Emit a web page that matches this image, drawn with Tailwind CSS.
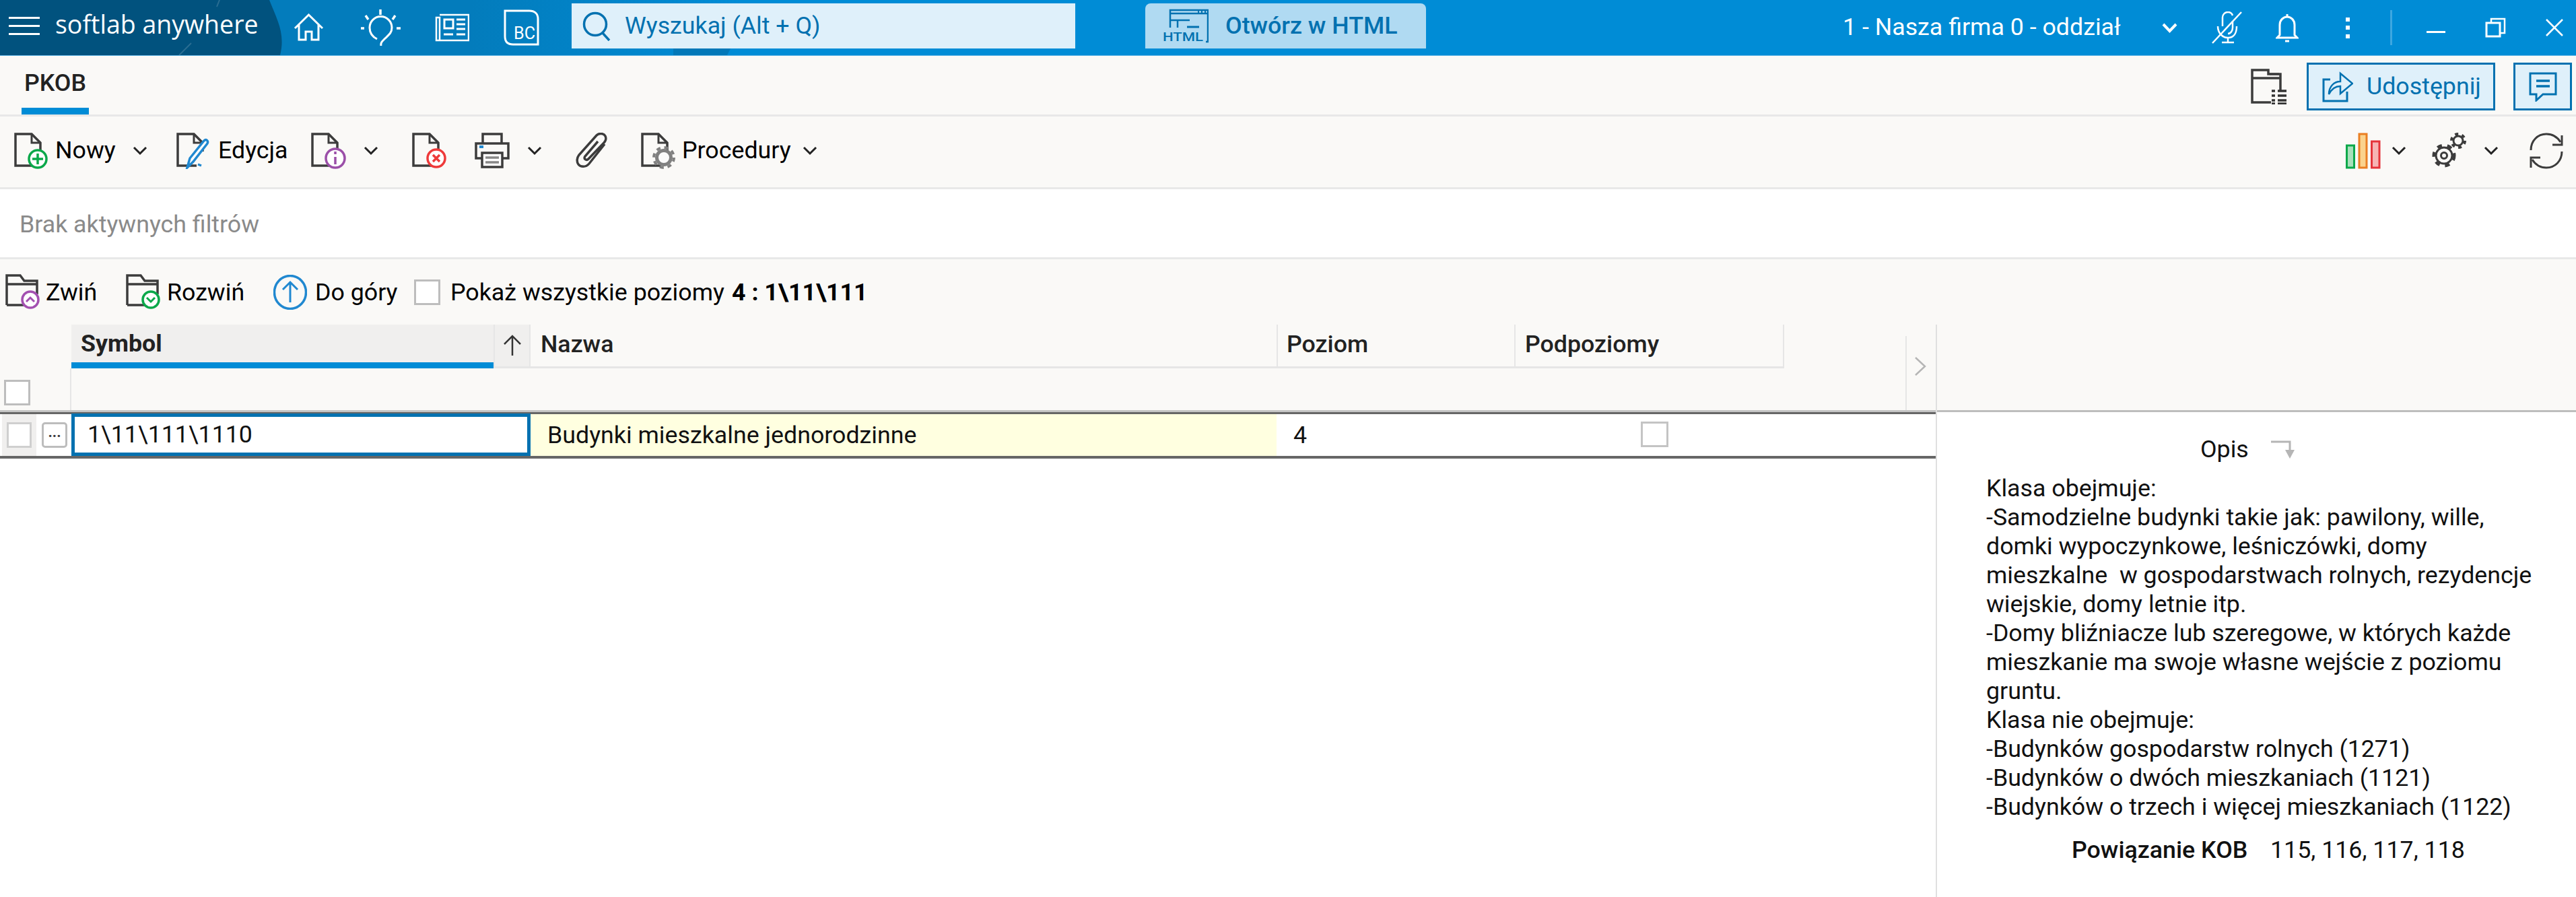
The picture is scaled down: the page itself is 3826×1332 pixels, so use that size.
<!DOCTYPE html>
<html lang="pl">
<head>
<meta charset="utf-8">
<title>PKOB</title>
<script src="https://cdn.jsdelivr.net/npm/@tailwindcss/browser@4"></script>
</head>
<body class="w-[3826px] h-[1332px] overflow-hidden bg-white font-['Roboto',sans-serif] text-[35.75px] leading-[43px] text-[#111]">
<svg class="hidden" width="0" height="0">
  <symbol id="doc" viewBox="0 0 52 52"><path d="M30 49H2V2H26L39 15V28" fill="#fff" fill-opacity="0" stroke="#3c3c3c" stroke-width="3.5"/><path d="M26 2V15H39" fill="none" stroke="#3c3c3c" stroke-width="3"/></symbol>
  <symbol id="chev" viewBox="0 0 22 14"><path d="M2 2L11 11L20 2" fill="none" stroke="#222" stroke-width="3"/></symbol>
  <symbol id="folder" viewBox="0 0 52 52"><path d="M2 46V8V2H22L28 10H47V15M2 46H32M2 15H47V30" fill="none" stroke="#3c3c3c" stroke-width="3.5"/></symbol>
</svg>

<!-- top bar -->
<header class="relative h-[83px] flex items-start bg-[linear-gradient(90deg,#037cbc_0,#037cbc_700px,#008cd6_1100px)] border-b border-[#66b8e6] text-white overflow-hidden">
  <svg class="absolute left-0 top-0" width="1200" height="82" viewBox="0 0 1200 82">
    <path d="M0 0H400C412 30 424 50 416 82H0Z" fill="#01527e"/>
    <path d="M326 0L322 10M284 64L266 82" stroke="#2a6d92" stroke-width="2"/>
    <path d="M1000 72H1085L1080 82H1000Z" fill="#0278b8"/>
  </svg>
  <div class="relative flex items-center h-[82px] shrink-0">
    <div class="ml-[13px] w-[46px] flex flex-col gap-[9px] pb-[6px]">
      <div class="h-[3px] bg-white"></div><div class="h-[3px] bg-white"></div><div class="h-[3px] bg-white"></div>
    </div>
    <div class="ml-[23px] w-[354px] pb-[12px] font-['Open_Sans',sans-serif] text-[37.5px] whitespace-nowrap">softlab anywhere</div>
    <svg width="45" height="42" viewBox="0 0 45 42"><path d="M2 22L22.500 2L43 22M8 17V39H18V27H27V39H37V17" fill="none" stroke="#fff" stroke-width="3"/></svg>
    <svg class="ml-[55px]" width="59" height="54" viewBox="0 0 59 54"><path d="M29 0V8M7 9L11 15M51 9L47 15M0 28H5M53 28H59" stroke="#fff" stroke-width="3.500"/><path d="M24 44C16 40 13 33 13 27A16.500 16.500 0 0 1 46 27C46 35 41 38 36 43C32 47 29 49 30 54" fill="none" stroke="#fff" stroke-width="3"/></svg>
    <svg class="ml-[51px]" width="51" height="42" viewBox="0 0 51 42"><path d="M7 2H50V40H2V6H7V40" fill="none" stroke="#fff" stroke-width="2.500"/><path d="M14 9H27V22H14Z" fill="none" stroke="#fff" stroke-width="3"/><path d="M32 9H45M32 16H45M32 23H45M13 31H27M32 31H45" stroke="#fff" stroke-width="3"/></svg>
    <svg class="ml-[51px]" width="53" height="54" viewBox="0 0 53 54"><path d="M2 2H38C46 2 51 6 51 14V52H14C6 52 2 48 2 40Z" fill="none" stroke="#fff" stroke-width="3"/><text x="15" y="44" font-family="Roboto" font-size="25" fill="#fff" textLength="32" lengthAdjust="spacingAndGlyphs">BC</text></svg>
  </div>
  <div class="relative mt-[5px] ml-[48px] w-[748px] h-[67px] bg-[#dff0fa] flex items-center text-[#0271b0] shrink-0">
    <svg class="ml-[16px]" width="42" height="44" viewBox="0 0 42 44"><circle cx="19" cy="19" r="16.500" fill="none" stroke="#0271b0" stroke-width="3.500"/><path d="M30 32L40 43" stroke="#0271b0" stroke-width="3.500"/></svg>
    <span class="ml-[21px] whitespace-nowrap">Wyszukaj (Alt + Q)</span>
  </div>
  <div class="relative mt-[5px] ml-[104px] w-[417px] h-[67px] bg-[#b0daf2] rounded-t-[8px] flex items-center text-[#0271b0] font-medium shrink-0">
    <svg class="ml-[26px]" width="68" height="52" viewBox="0 0 68 52"><path d="M11 18V2H67V49H64M11 7H67M11 17H40M22 17V28M11 18V28" fill="none" stroke="#0271b0" stroke-width="2.500"/><path d="M52 4.500H54M57 4.500H59M62 4.500H64" stroke="#0271b0" stroke-width="3"/><path d="M36 27H54" stroke="#0271b0" stroke-width="3"/><text x="0" y="48" font-family="Roboto" font-weight="500" font-size="19" fill="#0271b0" textLength="60" lengthAdjust="spacingAndGlyphs">HTML</text></svg>
    <span class="ml-[25px] whitespace-nowrap">Otwórz w HTML</span>
  </div>
  <div class="relative flex items-center h-[82px] ml-[621px] shrink-0">
    <div class="w-[410px] -ml-[2px] mr-[2px] pb-[2px] whitespace-nowrap">1 - Nasza firma 0 - oddział</div>
    <svg class="ml-[62px]" width="23" height="15" viewBox="0 0 23 15"><path d="M2 2L11.500 12L21 2" fill="none" stroke="#fff" stroke-width="4"/></svg>
    <svg class="ml-[50px]" width="48" height="48" viewBox="0 0 48 48"><path d="M32 6C31 3 28 1 25 1C21 1 17 4 17 9V22M32 14V24C32 29 29 33 25 33M10 22C10 31 16 39 25 39C33 39 38 33 38 22M25 39V46M16 46H34" fill="none" stroke="#fff" stroke-width="2.500"/><path d="M45 1L2 47" stroke="#fff" stroke-width="2.500"/></svg>
    <svg class="ml-[48px]" width="34" height="43" viewBox="0 0 34 43"><path d="M17 1V5M6 32V17C6 10 11 5 17 5C23 5 28 10 28 17V32L32 36H2Z" fill="none" stroke="#fff" stroke-width="3"/><path d="M14 41H20" stroke="#fff" stroke-width="3"/></svg>
    <div class="ml-[70px] w-[6px] h-[31px] flex flex-col justify-between">
      <div class="h-[6px] bg-white"></div><div class="h-[6px] bg-white"></div><div class="h-[6px] bg-white"></div>
    </div>
    <div class="ml-[60px] w-[3px] h-[52px] bg-[#3ea7e0]"></div>
    <div class="ml-[51px] w-[28px] h-[3px] bg-white mt-[12px]"></div>
    <svg class="ml-[59px]" width="31" height="30" viewBox="0 0 31 30"><path d="M9 7V2H29V23H22" fill="none" stroke="#fff" stroke-width="2.500"/><path d="M2 8H22V28H2Z" fill="none" stroke="#fff" stroke-width="3"/></svg>
    <svg class="ml-[58px]" width="28" height="26" viewBox="0 0 28 26"><path d="M2 1L26 25M26 1L2 25" stroke="#fff" stroke-width="2.500"/></svg>
  </div>
</header>

<!-- tabs -->
<div class="h-[90px] flex bg-[#faf9f7] border-b-[3px] border-[#e8e8e8]">
  <div class="ml-[32px] w-[100px] h-full border-b-[10px] border-[#008cd6] flex justify-center items-center font-medium text-[#222] pt-[4px]">PKOB</div>
  <div class="ml-auto flex">
    <svg class="mt-[19px]" width="53" height="53" viewBox="0 0 53 53"><path d="M44 32V8H26V2H2V50H30M2 14H44" fill="none" stroke="#3c3c3c" stroke-width="3.500"/><path d="M28 8H42" stroke="#3c3c3c" stroke-width="3"/><path d="M31 33H36M40 33H53M31 40H36M40 40H53M31 47H36M40 47H53M31 52H36M40 52H53" stroke="#333" stroke-width="3.500"/></svg>
    <div class="mt-[10px] ml-[30px] w-[280px] h-[71px] border-[3px] border-[#0271b0] bg-[#dff0fa] flex items-center text-[#0271b0]">
      <svg class="ml-[20px]" width="46" height="46" viewBox="0 0 46 46"><path d="M12 12H2V44H37V30" fill="none" stroke="#0271b0" stroke-width="3"/><path d="M10 34C10 22 18 15 27 15V3L45 18L27 33V22C20 22 14 26 10 34Z" fill="none" stroke="#0271b0" stroke-width="2.500"/></svg>
      <span class="ml-[20px] whitespace-nowrap">Udostępnij</span>
    </div>
    <div class="mt-[10px] ml-[27px] mr-[6px] w-[87px] h-[71px] border-[3px] border-[#0271b0] bg-[#dff0fa] flex items-center justify-center">
      <svg width="42" height="44" viewBox="0 0 42 44"><path d="M2 2H40V33H21L11 42V33H2Z" fill="none" stroke="#0271b0" stroke-width="3"/><path d="M11 13H31M11 21H31" stroke="#0271b0" stroke-width="3.500"/></svg>
    </div>
  </div>
</div>

<!-- toolbar -->
<div class="h-[108px] flex items-center bg-[#faf9f7] border-b-[3px] border-[#e8e8e8] text-black pb-[4px]">
  <svg class="ml-[21px]" width="50" height="54" viewBox="0 0 50 54"><use href="#doc" width="52" height="52"/><circle cx="35" cy="39" r="13" fill="#fff" stroke="#0ba84a" stroke-width="3.500"/><path d="M35 31V47M27 39H43" stroke="#0ba84a" stroke-width="3.500"/></svg>
  <span class="ml-[11px] w-[88px] whitespace-nowrap">Nowy</span>
  <svg class="ml-[27px]" width="22" height="14" viewBox="0 0 22 14"><use href="#chev"/></svg>
  <svg class="ml-[43px]" width="52" height="54" viewBox="0 0 52 54"><use href="#doc" width="52" height="52"/><path d="M32 47L37 49M16 52L20 38L41 12C44 9 48 12 46 16L25 43Z" fill="#fff" stroke="#2088d0" stroke-width="3.500"/></svg>
  <span class="ml-[10px] w-[101px] whitespace-nowrap">Edycja</span>
  <svg class="ml-[37px]" width="52" height="54" viewBox="0 0 52 54"><use href="#doc" width="52" height="52"/><circle cx="36" cy="38" r="14" fill="#fff" stroke="#9b4fa8" stroke-width="3.500"/><path d="M36 36V47M36 28V32" stroke="#9b4fa8" stroke-width="3.500"/></svg>
  <svg class="ml-[26px]" width="22" height="14" viewBox="0 0 22 14"><use href="#chev"/></svg>
  <svg class="ml-[50px]" width="52" height="54" viewBox="0 0 52 54"><use href="#doc" width="52" height="52"/><circle cx="36" cy="38" r="13" fill="#fff" stroke="#ee3a3a" stroke-width="3.500"/><path d="M31 33L41 43M41 33L31 43" stroke="#ee3a3a" stroke-width="3.500"/></svg>
  <svg class="ml-[41px]" width="52" height="54" viewBox="0 0 52 54"><path d="M12 16V2H40V16M10 38H2V16H50V38H42" fill="none" stroke="#3c3c3c" stroke-width="3.500"/><path d="M11 30H41V51H11Z" fill="#fff" stroke="#3c3c3c" stroke-width="3.500"/><path d="M7 21H13" stroke="#2088d0" stroke-width="4"/><path d="M16 37H36M16 44H36" stroke="#888" stroke-width="3.500"/></svg>
  <svg class="ml-[26px]" width="22" height="14" viewBox="0 0 22 14"><use href="#chev"/></svg>
  <svg class="ml-[50px]" width="50" height="54" viewBox="0 0 50 54"><path d="M43 17L20 46C15 52 7 51 4 47C1 43 2 37 5 33L31 4C35 0 42 1 44 5C46 9 44 13 42 15L19 39C16 42 11 39 14 35L33 13" fill="none" stroke="#3c3c3c" stroke-width="3.500"/></svg>
  <svg class="ml-[47px]" width="52" height="54" viewBox="0 0 52 54"><use href="#doc" width="52" height="52"/><circle cx="34" cy="37" r="10.500" fill="#fafafa" stroke="#808080" stroke-width="5"/><circle cx="34" cy="37" r="15" fill="none" stroke="#808080" stroke-width="4" stroke-dasharray="6 5.800"/></svg>
  <span class="ml-[9px] w-[160px] whitespace-nowrap">Procedury</span>
  <svg class="ml-[19px]" width="22" height="14" viewBox="0 0 22 14"><use href="#chev"/></svg>
  <div class="ml-auto flex items-center">
    <svg width="52" height="54" viewBox="0 0 52 54"><path d="M1.500 19H12.500V52H1.500Z" fill="#a8e0bb" stroke="#0ba84a" stroke-width="3"/><path d="M20 2H31V52H20Z" fill="#fbd38d" stroke="#ea7f22" stroke-width="3"/><path d="M38.500 13H50V52H38.500Z" fill="#f6b4b4" stroke="#e5333a" stroke-width="3"/></svg>
    <svg class="ml-[16px]" width="22" height="14" viewBox="0 0 22 14"><use href="#chev"/></svg>
    <svg class="ml-[37px]" width="52" height="54" viewBox="0 0 52 54"><circle cx="19" cy="34" r="12" fill="none" stroke="#3c3c3c" stroke-width="3"/><circle cx="19" cy="34" r="4.500" fill="none" stroke="#3c3c3c" stroke-width="3"/><circle cx="19" cy="34" r="15" fill="none" stroke="#3c3c3c" stroke-width="5" stroke-dasharray="7 8"/><circle cx="40" cy="12" r="7" fill="none" stroke="#3c3c3c" stroke-width="3"/><circle cx="40" cy="12" r="10" fill="none" stroke="#3c3c3c" stroke-width="4" stroke-dasharray="5 5.500"/></svg>
    <svg class="ml-[26px]" width="22" height="14" viewBox="0 0 22 14"><use href="#chev"/></svg>
    <svg class="ml-[45px] mr-[18px]" width="52" height="54" viewBox="0 0 52 54"><path d="M3 26C3 12 13 2 26 2C35 2 42 6 47 14" fill="none" stroke="#3c3c3c" stroke-width="3"/><path d="M49 4V18H35" fill="none" stroke="#3c3c3c" stroke-width="3"/><path d="M49 28C49 42 39 52 26 52C17 52 10 48 5 40" fill="none" stroke="#3c3c3c" stroke-width="3"/><path d="M3 52V37H17" fill="none" stroke="#3c3c3c" stroke-width="3"/></svg>
  </div>
</div>

<!-- filters -->
<div class="h-[104px] flex items-center bg-white border-b-[3px] border-[#e8e8e8] pl-[29px] pt-[3px] text-[#8a8a8a]">Brak aktywnych filtrów</div>

<!-- tree tools -->
<div class="h-[97px] flex items-center bg-[#faf9f7] text-black pt-[1px]">
  <svg class="ml-[8px]" width="52" height="54" viewBox="0 0 52 54"><use href="#folder" width="52" height="52"/><circle cx="37" cy="38" r="12" fill="#fff" stroke="#a350b0" stroke-width="3.500"/><path d="M31 41L37 35L43 41" fill="none" stroke="#a350b0" stroke-width="3"/></svg>
  <span class="ml-[8px] w-[75px] whitespace-nowrap">Zwiń</span>
  <svg class="ml-[44px]" width="52" height="54" viewBox="0 0 52 54"><use href="#folder" width="52" height="52"/><circle cx="37" cy="38" r="12" fill="#fff" stroke="#0ba84a" stroke-width="3.500"/><path d="M31 35L37 41L43 35" fill="none" stroke="#0ba84a" stroke-width="3"/></svg>
  <span class="ml-[9px] w-[113px] whitespace-nowrap">Rozwiń</span>
  <svg class="ml-[45px]" width="50" height="52" viewBox="0 0 50 52"><ellipse cx="25" cy="26" rx="23.500" ry="24.500" fill="none" stroke="#2088d0" stroke-width="3.500"/><path d="M25 41V11M14 22L25 11L36 22" fill="none" stroke="#2088d0" stroke-width="3"/></svg>
  <span class="ml-[12px] w-[121px] whitespace-nowrap">Do góry</span>
  <div class="ml-[26px] w-[39px] h-[38px] border-[3px] border-[#bdbdbd] bg-white"></div>
  <span class="ml-[15px] w-[404px] whitespace-nowrap">Pokaż wszystkie poziomy</span>
  <span class="ml-[14px] whitespace-nowrap font-bold">4 : 1\11\111</span>
</div>

<!-- main -->
<div class="flex h-[850px]">
  <div class="w-[2877px] shrink-0 border-r-2 border-[#e0e0e0] bg-white">
    <div class="h-[65px] flex bg-[#faf9f7]">
      <div class="w-[106px] shrink-0"></div>
      <div class="w-[627px] h-[65px] bg-[#f0efee] border-b-[9px] border-[#008cd6] flex items-center pl-[14px] font-bold text-[#222]">Symbol</div>
      <div class="w-[55px] bg-[#f0efee] border-l-2 border-r-2 border-b-[3px] border-[#e6e6e6] flex items-center justify-center">
        <svg width="30" height="32" viewBox="0 0 30 32"><path d="M15 31V3M3 14L15 2L27 14" fill="none" stroke="#333" stroke-width="2.500"/></svg>
      </div>
      <div class="w-[1108px] border-b-[3px] border-[#e6e6e6] flex items-center pl-[15px] pb-[4px] font-medium text-[#222]">Nazwa</div>
      <div class="w-[353px] border-l-2 border-b-[3px] border-[#e6e6e6] flex items-center pl-[13px] pb-[4px] font-medium text-[#222]">Poziom</div>
      <div class="w-[401px] border-l-2 border-r-2 border-b-[3px] border-[#e6e6e6] flex items-center pl-[14px] pb-[4px] font-medium text-[#222]">Podpoziomy</div>
      <div class="w-[180px]"></div>
      <div class="w-[45px] mt-[17px] border-l-2 border-[#e6e6e6]"></div>
    </div>
    <div class="h-[62px] flex bg-[#faf9f7]">
      <div class="w-[106px] h-full border-r-2 border-[#e6e6e6] pl-[6px] pt-[17px]">
        <div class="w-[39px] h-[38px] border-[3px] border-[#bdbdbd] bg-white"></div>
      </div>
      <div class="w-[2724px]"></div>
      <div class="w-[45px] border-l-2 border-[#e6e6e6] relative">
        <svg class="absolute left-[11px] -top-[17px]" width="18" height="28" viewBox="0 0 18 28"><path d="M2 1L16 14L2 27" fill="none" stroke="#b5b5b5" stroke-width="2.500"/></svg>
      </div>
    </div>
    <div class="h-[3px] bg-[#c4c4c4]"></div>
    <div class="h-[3px] bg-[#666]"></div>
    <div class="h-[62px] flex items-stretch bg-white">
      <div class="w-[54px] bg-[#f0efee] pl-[10px] pt-[12px] border-l-[3px] border-white">
        <div class="w-[37px] h-[38px] -ml-[3px] border-[3px] border-[#cfcfcf] bg-white"></div>
      </div>
      <div class="w-[52px] pl-[8px] pt-[12px]">
        <div class="w-[38px] h-[38px] border-[3px] border-[#bdbdbd] rounded-[5px] flex justify-center items-center text-[22px] leading-none pb-[8px] font-bold text-[#333]">...</div>
      </div>
      <div class="w-[682px] -mt-[1px] border-[5px] border-[#0271b0] bg-white flex items-center pl-[19px] whitespace-nowrap">1\11\111\1110</div>
      <div class="w-[1108px] bg-[#ffffe0] flex items-center pl-[25px] whitespace-nowrap">Budynki mieszkalne jednorodzinne</div>
      <div class="w-[353px] flex items-center pl-[25px]">4</div>
      <div class="w-[626px] pl-[188px] pt-[11px]">
        <div class="w-[41px] h-[38px] border-[3px] border-[#c4c4c4] bg-white"></div>
      </div>
    </div>
    <div class="h-[4px] bg-[#666] w-[2875px]"></div>
  </div>

  <aside class="flex-1 bg-white">
    <div class="h-[127px] bg-[#faf9f7]"></div>
    <div class="h-[3px] bg-[#bdbdbd]"></div>
    <div class="mt-[34px] flex items-center ml-[391px] h-[43px]">
      <span>Opis</span>
      <svg class="ml-[33px]" width="36" height="28" viewBox="0 0 36 28"><path d="M0 2H28V18" fill="none" stroke="#b5b5b5" stroke-width="3"/><path d="M21 14H35L28 27Z" fill="#b5b5b5"/></svg>
    </div>
    <div class="mt-[15px] ml-[73px] whitespace-pre">Klasa obejmuje:
-Samodzielne budynki takie jak: pawilony, wille,
domki wypoczynkowe, leśniczówki, domy
mieszkalne  w gospodarstwach rolnych, rezydencje
wiejskie, domy letnie itp.
-Domy bliźniacze lub szeregowe, w których każde
mieszkanie ma swoje własne wejście z poziomu
gruntu.
Klasa nie obejmuje:
-Budynków gospodarstw rolnych (1271)
-Budynków o dwóch mieszkaniach (1121)
-Budynków o trzech i więcej mieszkaniach (1122)</div>
    <div class="mt-[21px] ml-[200px] flex whitespace-nowrap">
      <span class="w-[295px] font-medium">Powiązanie KOB</span>
      <span>115, 116, 117, 118</span>
    </div>
  </aside>
</div>
</body>
</html>
